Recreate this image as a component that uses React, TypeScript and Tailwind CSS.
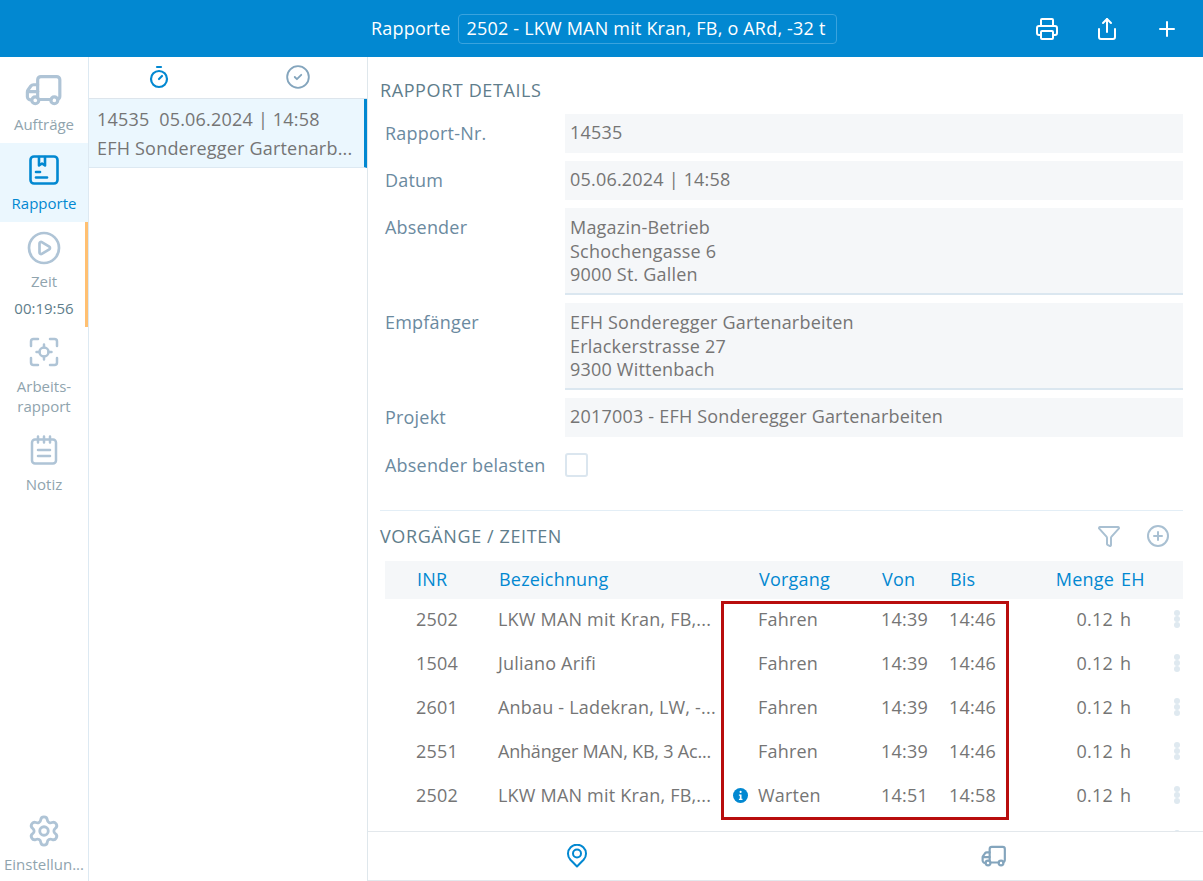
import React from "react";
import { Printer, Share, Plus, Timer, CircleCheck, CirclePlay, Settings, Funnel, CirclePlus } from "lucide-react";

const Truck = ({ className = "" }: { className?: string }) => (
  <svg viewBox="0 0 24 24" fill="none" stroke="currentColor" strokeWidth="2" strokeLinecap="round" strokeLinejoin="round" className={className}>
    <path d="M8 17V5.500A2 2 0 0 1 10 3.500h10a2 2 0 0 1 2 2V16a2 2 0 0 1-1.500 1.900" />
    <path d="M16.500 18H9.500" />
    <path d="M4 18.200A2 2 0 0 1 1.500 16.400v-3.200c0-.6.2-1 .5-1.400l1.700-2.300c.4-.5 1-.8 1.600-.8H8" />
    <path d="M1.800 13H8" />
    <circle cx="6.500" cy="18.500" r="2.200" />
    <circle cx="18.500" cy="18.500" r="2.200" />
  </svg>
);

const ReportIcon = ({ className = "" }: { className?: string }) => (
  <svg viewBox="0 0 30 30" fill="none" stroke="currentColor" strokeWidth="2.600" strokeLinecap="round" strokeLinejoin="round" className={className}>
    <rect x="1.500" y="1.500" width="27" height="27" rx="3.500" />
    <path d="M10 2v8.500l3-2 3 2V2" />
    <path d="M7 17h4" />
    <path d="M7 22.500h11" />
  </svg>
);

const ScanIcon = ({ className = "" }: { className?: string }) => (
  <svg viewBox="0 0 30 30" fill="none" stroke="currentColor" strokeWidth="2.500" strokeLinecap="round" strokeLinejoin="round" className={className}>
    <path d="M2 9V4.500A2.500 2.500 0 0 1 4.500 2H9" />
    <path d="M21 2h4.500A2.500 2.500 0 0 1 28 4.500V9" />
    <path d="M28 21v4.500a2.500 2.500 0 0 1-2.500 2.500H21" />
    <path d="M9 28H4.500A2.500 2.500 0 0 1 2 25.500V21" />
    <circle cx="15" cy="15" r="4.500" />
    <path d="M15 7.500v3M15 19.500v3M7.500 15h3M19.500 15h3" />
  </svg>
);

const NoteIcon = ({ className = "" }: { className?: string }) => (
  <svg viewBox="0 0 28 30" fill="none" stroke="currentColor" strokeWidth="2.500" strokeLinecap="round" strokeLinejoin="round" className={className}>
    <rect x="2" y="4.500" width="24" height="24" rx="3" />
    <path d="M8 1.500v6M14 1.500v6M20 1.500v6" />
    <path d="M8 15h12M8 21h12" />
  </svg>
);

const PinIcon = ({ className = "" }: { className?: string }) => (
  <svg viewBox="0 0 20 24" fill="none" stroke="currentColor" strokeWidth="2" strokeLinejoin="round" className={className}>
    <path d="M10 22.500 3.400 15.800a9 9 0 1 1 13.200 0Z" />
    <circle cx="10" cy="9.500" r="4" />
  </svg>
);

const InfoIcon = () => (
  <svg viewBox="0 0 16 16" className="h-[15px] w-[15px]">
    <circle cx="8" cy="8" r="8" fill="#0288d1" />
    <rect x="7" y="3" width="2.200" height="2.200" rx="1" fill="#fff" />
    <path d="M6.300 6.800h2.800v4.600h1v1.400H6.300v-1.400h1V8.200h-1Z" fill="#fff" />
  </svg>
);

const Dots = () => (
  <div className="flex flex-col items-center">
    <span className="h-[6px] w-[6px] rounded-full bg-[#dfe9f0]" />
    <span className="h-[6px] w-[6px] rounded-full bg-[#dfe9f0]" />
    <span className="h-[6px] w-[6px] rounded-full bg-[#dfe9f0]" />
  </div>
);

const NavItem = ({ icon, label, extra, active, orange, h, gap }: { icon: React.ReactNode; label: React.ReactNode; extra?: string; active?: boolean; orange?: boolean; h: string; gap: string }) => (
  <div className={`relative flex flex-col items-center tracking-normal ${h} ${active ? "bg-[#ebf7fe] text-[#0288d1]" : "text-[#afc4d6]"}`}>
    {icon}
    <div className={`${gap} text-center text-[15px] leading-[20px] ${active ? "text-[#0288d1]" : "text-[#90a4ae]"}`}>{label}</div>
    {extra && <div className="mt-[7px] text-[15px] leading-[20px] text-[#607d8b]">{extra}</div>}
    {orange && <span className="absolute right-0 top-0 h-full w-[3px] bg-[#ffc072]" />}
  </div>
);

const Field = ({ label, lines, tall }: { label: string; lines: string[]; tall?: boolean }) => (
  <div className="flex">
    <div className="w-[180px] shrink-0 pt-[7px] leading-[24px] text-[#6b8a9f]">{label}</div>
    <div className={`flex-1 bg-[#f5f7f9] px-[5px] leading-[23.500px] text-[#757575] ${tall ? "h-[87px] border-b-2 border-[#dbe7f0] pt-[8px]" : "h-[39px] pt-[7px]"}`}>
      {lines.map((l) => (
        <div key={l} className="whitespace-nowrap">{l}</div>
      ))}
    </div>
  </div>
);

const rowGrid = "grid grid-cols-[82px_214px_46px_123px_68px_94px_70px_36px_1fr] items-center";

const rows = [
  ["2502", "LKW MAN mit Kran, FB,...", "Fahren", "14:39", "14:46"],
  ["1504", "Juliano Arifi", "Fahren", "14:39", "14:46"],
  ["2601", "Anbau - Ladekran, LW, -...", "Fahren", "14:39", "14:46"],
  ["2551", "Anhänger MAN, KB, 3 Ac...", "Fahren", "14:39", "14:46"],
  ["2502", "LKW MAN mit Kran, FB,...", "Warten", "14:51", "14:58"],
];

export default function App() {
  return (
    <div className="flex h-[881px] w-[1203px] flex-col overflow-hidden bg-white font-['Open_Sans','Noto_Sans',sans-serif] text-[18px] tracking-[0.2px] text-[#757575]">
      <header className="flex h-[57px] shrink-0 items-center bg-[#0288d1] text-white">
        <div className="flex flex-1 items-center pl-[371px]">
          <span className="whitespace-nowrap">Rapporte</span>
          <div className="ml-[8px] flex h-[30px] w-[379px] items-center overflow-hidden whitespace-nowrap rounded-[4px] border border-[#3aa3de] pl-[7px]">2502 - LKW MAN mit Kran, FB, o ARd, -32 t</div>
        </div>
        <div className="flex items-center gap-[36px] pr-[24px]">
          <Printer className="h-[24px] w-[24px]" strokeWidth={2} />
          <Share className="h-[24px] w-[24px]" strokeWidth={2} />
          <Plus className="h-[24px] w-[24px]" strokeWidth={2} />
        </div>
      </header>
      <div className="flex min-h-0 flex-1">
        <aside className="flex w-[89px] shrink-0 flex-col border-r border-[#dde9f2]">
          <NavItem h="h-[86px] pt-[14px]" gap="mt-[5px]" icon={<Truck className="h-[38px] w-[38px]" />} label="Aufträge" />
          <NavItem h="h-[79px] pt-[12px]" gap="mt-[8px]" active icon={<ReportIcon className="h-[30px] w-[30px]" />} label="Rapporte" />
          <NavItem h="h-[105px] pt-[8px]" gap="mt-[5px]" orange icon={<CirclePlay className="h-[36px] w-[36px]" strokeWidth={1.800} />} label="Zeit" extra="00:19:56" />
          <NavItem h="h-[99px] pt-[10px]" gap="mt-[9px]" icon={<ScanIcon className="h-[30px] w-[30px]" />} label={<>Arbeits-<br />rapport</>} />
          <NavItem h="h-[90px] pt-[9px]" gap="mt-[9px]" icon={<NoteIcon className="h-[30px] w-[28px]" />} label="Notiz" />
          <div className="mt-auto flex flex-col items-center pb-[7px] tracking-normal text-[#afc4d6]">
            <Settings className="h-[34px] w-[34px]" strokeWidth={2} />
            <div className="mt-[6px] whitespace-nowrap text-[15px] leading-[20px] text-[#90a4ae]">Einstellun...</div>
          </div>
        </aside>
        <section className="flex w-[279px] shrink-0 flex-col border-r border-[#dfe7ec]">
          <div className="grid h-[42px] shrink-0 grid-cols-2 items-center border-b border-[#dde5ec] pb-[2px]">
            <div className="flex justify-center"><Timer className="h-[24px] w-[24px] text-[#0288d1]" strokeWidth={2.200} /></div>
            <div className="flex justify-center"><CircleCheck className="h-[26px] w-[26px] text-[#84a5bd]" strokeWidth={1.700} /></div>
          </div>
          <div className="h-[69px] border-r-[3px] border-b border-r-[#0288d1] border-b-[#dde9f2] bg-[#ebf7fe] pl-[8px] pt-[6px] leading-[29px]">
            <div className="whitespace-nowrap">14535&nbsp;&nbsp;05.06.2024 | 14:58</div>
            <div className="whitespace-nowrap">EFH Sonderegger Gartenarb...</div>
          </div>
        </section>
        <main className="flex min-w-0 flex-1 flex-col">
          <div className="min-h-0 flex-1 overflow-hidden pl-[12px] pr-[20px]">
            <h2 className="pt-[21px] leading-[24px] tracking-[0.6px] text-[#607d8b]">RAPPORT DETAILS</h2>
            <div className="mt-[12px] flex flex-col gap-[8px] pl-[5px]">
              <Field label="Rapport-Nr." lines={["14535"]} />
              <Field label="Datum" lines={["05.06.2024 | 14:58"]} />
              <Field label="Absender" lines={["Magazin-Betrieb", "Schochengasse 6", "9000 St. Gallen"]} tall />
              <Field label="Empfänger" lines={["EFH Sonderegger Gartenarbeiten", "Erlackerstrasse 27", "9300 Wittenbach"]} tall />
              <Field label="Projekt" lines={["2017003 - EFH Sonderegger Gartenarbeiten"]} />
              <div className="flex h-[39px] items-center">
                <div className="w-[180px] whitespace-nowrap leading-[24px] text-[#6b8a9f]">Absender belasten</div>
                <span className="h-[24px] w-[23px] rounded-[3px] border-2 border-[#dbe6ef] bg-white" />
              </div>
            </div>
            <div className="mt-[26px] flex h-[51px] items-center justify-between border-t border-[#e3eef6]">
              <h2 className="tracking-[0.6px] text-[#607d8b]">VORGÄNGE / ZEITEN</h2>
              <div className="mr-[13px] flex items-center gap-[25px] text-[#a9c0d2]">
                <Funnel className="h-[24px] w-[24px]" strokeWidth={2} />
                <CirclePlus className="h-[24px] w-[24px]" strokeWidth={2} />
              </div>
            </div>
            <div className="relative ml-[5px]">
              <div className={`${rowGrid} h-[38px] bg-[#f5f7f9] pb-[1px] pl-[32px] text-[#0288d1]`}>
                <span>INR</span>
                <span className="col-span-2">Bezeichnung</span>
                <span>Vorgang</span>
                <span>Von</span>
                <span>Bis</span>
                <span className="text-right">Menge</span>
                <span className="pl-[7px]">EH</span>
              </div>
              {rows.map((r, i) => (
                <div key={i} className={`${rowGrid} h-[44px] pb-[4px] pl-[31px]`}>
                  <span>{r[0]}</span>
                  <span className={`whitespace-nowrap ${i === 3 ? "tracking-[-0.2px]" : ""}`}>{r[1]}</span>
                  <span className="flex items-center justify-end pr-[10px]">{r[2] === "Warten" && <InfoIcon />}</span>
                  <span>{r[2]}</span>
                  <span>{r[3]}</span>
                  <span>{r[4]}</span>
                  <span className="text-right">0.12</span>
                  <span className="pl-[7px]">h</span>
                  <span className="flex justify-start pl-[25px]"><Dots /></span>
                </div>
              ))}
              <div className={`${rowGrid} h-[44px] pb-[4px] pl-[31px]`}>
                <span className="col-start-9 flex justify-start pl-[25px]"><Dots /></span>
              </div>
              <div className="absolute left-[336px] top-[40px] h-[219px] w-[288px] border-[3px] border-[#b80d0d]" />
            </div>
          </div>
          <div className="grid h-[50px] shrink-0 grid-cols-2 items-center border-y border-[#e3e8ec]">
            <div className="flex justify-center"><PinIcon className="h-[24px] w-[20px] text-[#0288d1]" /></div>
            <div className="flex justify-center"><Truck className="h-[26px] w-[26px] text-[#84a5bd]" /></div>
          </div>
        </main>
      </div>
    </div>
  );
}
